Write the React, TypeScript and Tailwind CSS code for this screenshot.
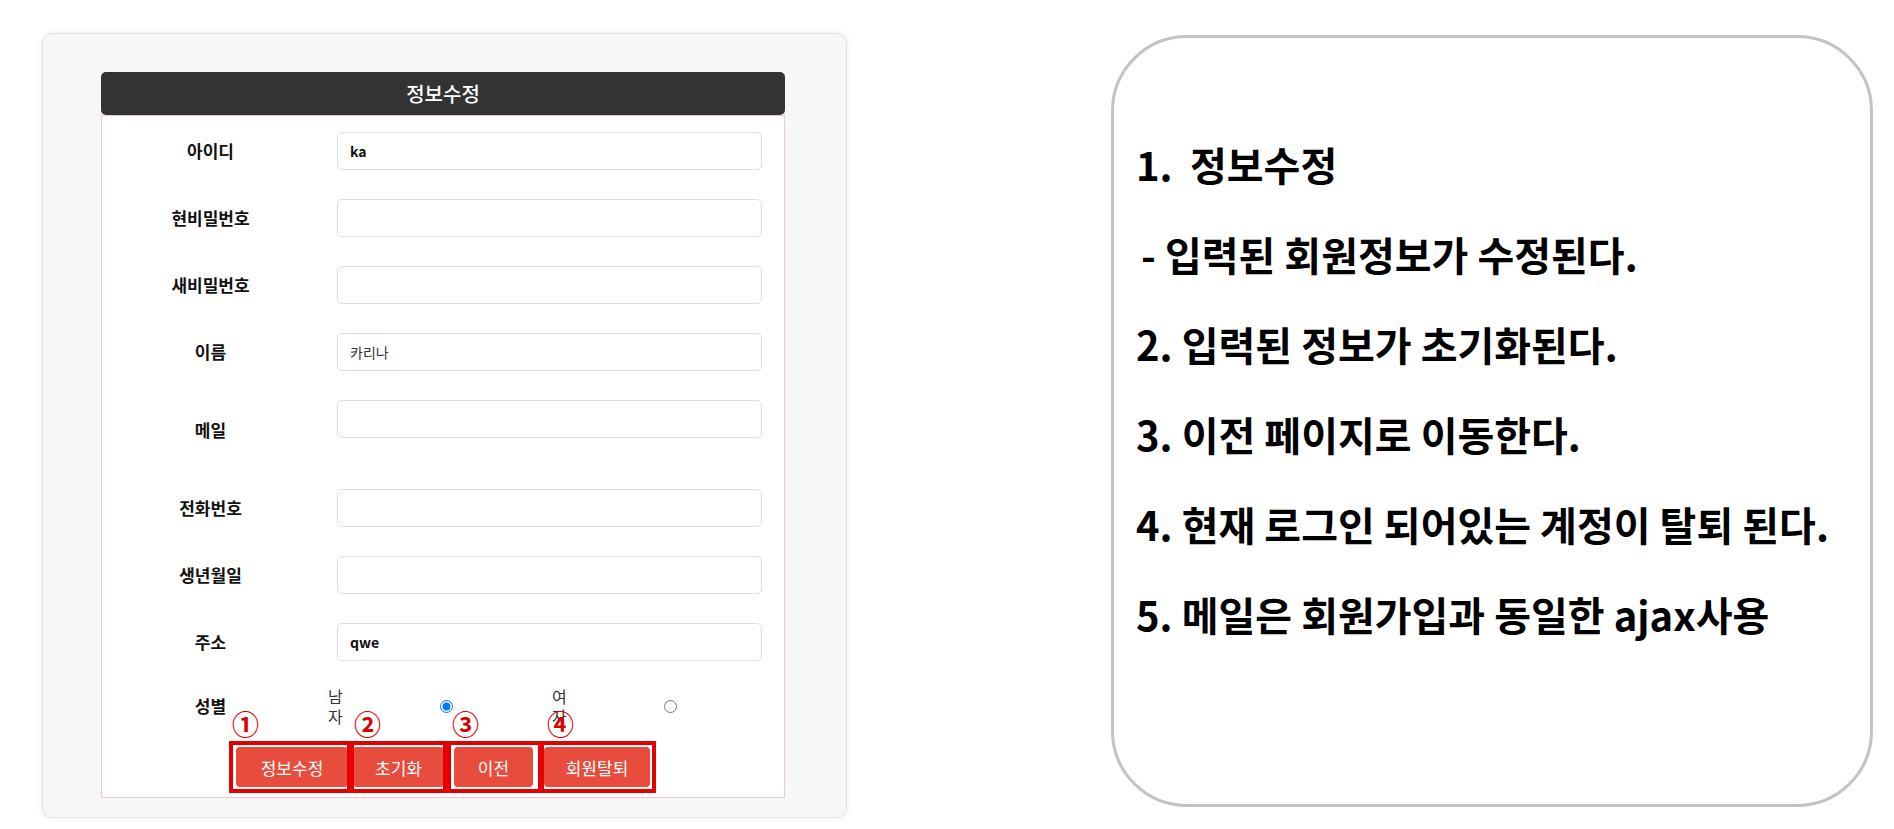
import React from 'react';

const FONT = { fontFamily: '"Noto Sans CJK KR", "Noto Sans", sans-serif' };

type Field = { label: string; value?: string; bold?: boolean; extra?: boolean };

const fields: Field[] = [
  { label: '아이디', value: 'ka', bold: true },
  { label: '현비밀번호' },
  { label: '새비밀번호' },
  { label: '이름', value: '카리나' },
  { label: '메일', extra: true },
  { label: '전화번호' },
  { label: '생년월일' },
  { label: '주소', value: 'qwe', bold: true },
];

const FormRow = ({ field, first }: { field: Field; first: boolean }) => {
  return (
    <div className={`flex items-center ${first ? '' : 'mt-[29px]'}`}>
      <div className="w-[217px] text-center text-[17px] font-bold text-[#111]">{field.label}</div>
      <div className="ml-[18px] flex flex-col">
        <div
          className={`w-[425px] h-[38px] bg-white border border-[#dedede] rounded-[5px] flex items-center pl-[12px] text-[14px] ${
            field.bold ? 'font-bold text-[#111]' : 'text-[#333]'
          }`}
        >
          {field.value}
        </div>
        {/* 메일 인증 영역 (숨김) */}
        {field.extra && <div className="h-[22px]" />}
      </div>
    </div>
  );
};

const App = () => {
  return (
    <div className="min-h-screen bg-white flex items-start pl-[42px] pt-[33px]" style={FONT}>
      {/* 정보수정 폼 */}
      <div className="w-[805px] bg-[#f7f7f7] border border-[#e2e2e2] rounded-[10px] shadow-[0_0_6px_rgba(0,0,0,0.08)] pl-[58px] pt-[38px] pb-[19px]">
        <div className="w-[684px]">
          <div className="h-[43px] bg-[#333333] rounded-[5px] flex items-center justify-center text-white text-[20px] font-medium">
            정보수정
          </div>
          <div className="bg-white border border-[#f2c6ce] pt-[16px] pb-[10px]">
            {fields.map((f, i) => (
              <FormRow key={f.label} field={f} first={i === 0} />
            ))}

            {/* 성별 */}
            <div className="flex items-center mt-[25px]">
              <div className="w-[217px] text-center text-[17px] font-bold text-[#111]">성별</div>
              <span className="ml-[9px] w-[16px] text-[16px] leading-[20px] text-[#333]">
                남<br />자
              </span>
              <input type="radio" name="gender" defaultChecked className="ml-[96px] m-0 w-[13px] h-[13px]" />
              <span className="ml-[99px] w-[16px] text-[16px] leading-[20px] text-[#333]">
                여<br />자
              </span>
              <input type="radio" name="gender" className="ml-[96px] m-0 w-[13px] h-[13px]" />
            </div>

            {/* 버튼 */}
            <div className="flex justify-center mt-[21px]">
              <div className="relative flex">
                <button className="w-[112px] h-[40px] bg-[#e74c3c] rounded-[4px] text-white text-[17px] leading-none">
                  정보수정
                </button>
                <button className="ml-[5px] w-[91px] h-[40px] bg-[#e74c3c] rounded-[4px] text-white text-[17px] leading-none">
                  초기화
                </button>
                <button className="ml-[10px] w-[79px] h-[40px] bg-[#e74c3c] rounded-[4px] text-white text-[17px] leading-none">
                  이전
                </button>
                <button className="ml-[11px] w-[106px] h-[40px] bg-[#e74c3c] rounded-[4px] text-white text-[17px] leading-none">
                  회원탈퇴
                </button>

                {/* 설명용 표시 */}
                <div className="absolute left-[-7px] top-[-6px] w-[122px] h-[52px] border-[4px] border-[#e50000]" />
                <div className="absolute left-[114px] top-[-6px] w-[97px] h-[52px] border-[4px] border-[#e50000]" />
                <div className="absolute left-[211px] top-[-6px] w-[95px] h-[52px] border-[4px] border-[#e50000]" />
                <div className="absolute left-[304px] top-[-6px] w-[116px] h-[52px] border-[4px] border-[#e50000]" />

                <span className="absolute left-[-4px] top-[-38px] text-[27px] font-bold text-[#d90000] leading-[30px]">①</span>
                <span className="absolute left-[118px] top-[-38px] text-[27px] font-bold text-[#d90000] leading-[30px]">②</span>
                <span className="absolute left-[216px] top-[-38px] text-[27px] font-bold text-[#d90000] leading-[30px]">③</span>
                <span className="absolute left-[311px] top-[-38px] text-[27px] font-bold text-[#d90000] leading-[30px]">④</span>
              </div>
            </div>
          </div>
        </div>
      </div>

      {/* 설명 패널 */}
      <div className="ml-[264px] mt-[2px] w-[762px] h-[772px] bg-white border-[3px] border-[#c3c3c3] rounded-[76px] pl-[22px] pt-[81px] text-[40px] font-bold text-black">
        <div className="h-[90px] flex items-center">
          <span className="inline-block w-[54px]">1.</span>
          <span>정보수정</span>
        </div>
        <div className="h-[90px] flex items-center pl-[5px]">- 입력된 회원정보가 수정된다.</div>
        <div className="h-[90px] flex items-center">2. 입력된 정보가 초기화된다.</div>
        <div className="h-[90px] flex items-center">3. 이전 페이지로 이동한다.</div>
        <div className="h-[90px] flex items-center">4. 현재 로그인 되어있는 계정이 탈퇴 된다.</div>
        <div className="h-[90px] flex items-center">5. 메일은 회원가입과 동일한 ajax사용</div>
      </div>
    </div>
  );
};

export default App;
